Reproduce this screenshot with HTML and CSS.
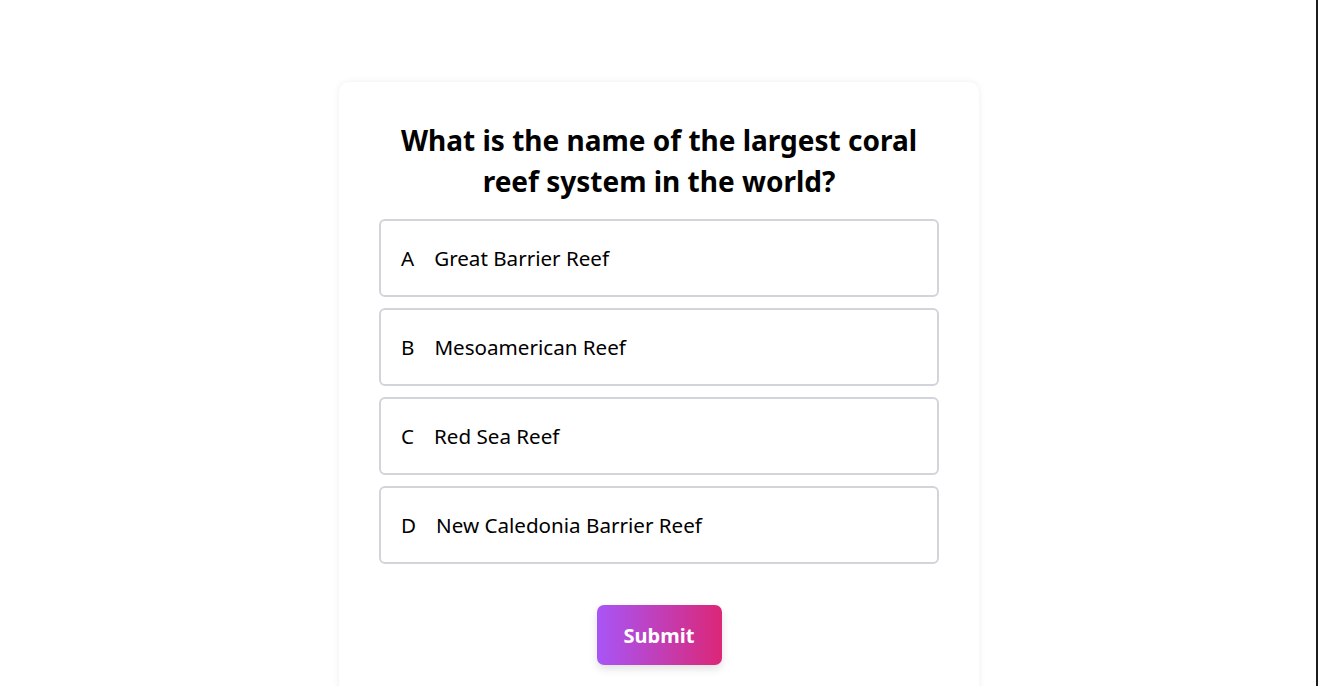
FILE: index.html
```html
<!DOCTYPE html>
<html lang="en">
<head>
<meta charset="utf-8">
<title>Quiz</title>
<link rel="stylesheet" href="styles.css">
</head>
<body>
<main class="page">
  <section class="card">
    <h1 class="question">What is the name of the largest coral reef system in the world?</h1>
    <ul class="options">
      <li class="option"><span class="letter">A</span><span class="label">Great Barrier Reef</span></li>
      <li class="option"><span class="letter">B</span><span class="label">Mesoamerican Reef</span></li>
      <li class="option"><span class="letter">C</span><span class="label">Red Sea Reef</span></li>
      <li class="option"><span class="letter">D</span><span class="label">New Caledonia Barrier Reef</span></li>
    </ul>
    <div class="actions">
      <button class="submit" type="button">Submit</button>
    </div>
  </section>
</main>
</body>
</html>
```

FILE: styles.css
```css
* { box-sizing: border-box; }
html {
  height: 100%;
  background: #fff;
  box-shadow: inset -2px 0 0 #1c1c1c;
}
body {
  margin: 0;
  height: 100%;
  overflow: hidden;
  font-family: "Noto Sans", "Open Sans", sans-serif;
  color: #000;
}
.page {
  display: flex;
  justify-content: center;
  padding-top: 82px;
}
.card {
  width: 640px;
  background: #fff;
  border-radius: 10px;
  box-shadow: 0 0 7px rgba(0,0,0,0.07);
  padding: 38px 40px 60px;
}
.question {
  margin: 0 0 17px;
  text-align: center;
  font-size: 28px;
  line-height: 41px;
  font-weight: 700;
  padding: 0 18px;
}
.options {
  list-style: none;
  margin: 0;
  padding: 0;
  display: flex;
  flex-direction: column;
  gap: 11px;
}
.option {
  display: flex;
  align-items: center;
  height: 78px;
  border: 2px solid #d1d5db;
  border-radius: 6px;
  padding: 0 20px;
  font-size: 20.6px;
}
.letter { margin-right: 20px; }
.actions {
  display: flex;
  justify-content: center;
  margin-top: 41px;
}
.submit {
  font-family: inherit;
  font-size: 20px;
  font-weight: 700;
  color: #fff;
  border: none;
  border-radius: 7px;
  width: 125px;
  height: 60px;
  background: linear-gradient(90deg, #a855f7, #db2777);
  box-shadow: 0 4px 8px rgba(0,0,0,0.12);
}
```
